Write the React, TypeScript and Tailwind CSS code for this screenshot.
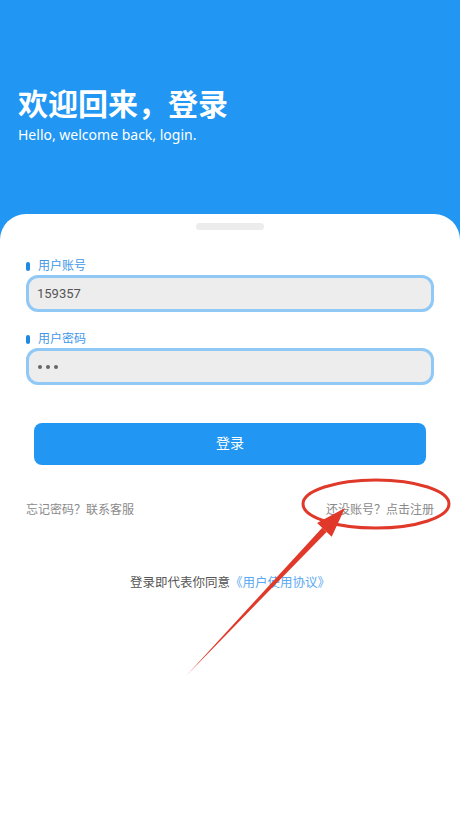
import React from "react";

const font = { fontFamily: '"Noto Sans", "Noto Sans CJK SC", sans-serif' };

function Field({ label, value, dots }: { label: string; value?: string; dots?: boolean }) {
  return (
    <div>
      <div className="flex items-center h-[16px] mt-[1px]">
        <span className="w-[4px] h-[9px] rounded-full bg-[#1e88e5]" />
        <span className="ml-[8px] text-[12px] leading-[16px] text-[#3f97e8]">{label}</span>
      </div>
      <div className="mt-[1px] h-[37px] rounded-[12px] border-[3px] border-[#90c8f6] bg-[#ededed] flex items-center px-[8px]">
        {dots ? (
          <div className="flex gap-[4px] ml-[1px]">
            <span className="w-[4px] h-[4px] rounded-full bg-[#666]" />
            <span className="w-[4px] h-[4px] rounded-full bg-[#666]" />
            <span className="w-[4px] h-[4px] rounded-full bg-[#666]" />
          </div>
        ) : (
          <span className="text-[13px] text-[#555]" style={{ fontFamily: "Roboto, sans-serif" }}>
            {value}
          </span>
        )}
      </div>
    </div>
  );
}

// red annotation drawn over the screenshot
function Annotation() {
  return (
    <svg className="absolute inset-0 pointer-events-none" width="460" height="819" viewBox="0 0 460 819">
      <ellipse cx="376" cy="504" rx="73" ry="24" fill="none" stroke="#e0392a" strokeWidth="3" />
      <polygon points="187,675 326.6,531.9 322.2,527.7" fill="#e0392a" />
      <polygon points="345,508 331.7,536.7 317.1,522.9" fill="#e0392a" />
    </svg>
  );
}

export default function App() {
  return (
    <div className="relative w-[460px] h-[819px] bg-[#2196f3] flex flex-col overflow-hidden" style={font}>
      <div className="h-[214px] px-[18px] pt-[85px] text-white">
        <h1 className="text-[30px] leading-[38px] font-bold">欢迎回来，登录</h1>
        <p className="text-[14px] leading-[18px] mt-[3px]">Hello, welcome back, login.</p>
      </div>

      <div className="flex-1 bg-white rounded-t-[26px] flex flex-col">
        <div className="mx-auto mt-[9px] w-[68px] h-[7px] rounded-full bg-[#ececec]" />

        <div className="px-[26px] mt-[27px] flex flex-col gap-[18px]">
          <Field label="用户账号" value="159357" />
          <Field label="用户密码" dots />
        </div>

        <button className="mx-[34px] mt-[38px] h-[42px] rounded-[8px] bg-[#2196f3] text-white text-[14px] leading-[20px] pb-[2px]">
          登录
        </button>

        <div className="px-[26px] mt-[37px] flex justify-between text-[12px] leading-[16px] text-[#8a8a8a]">
          <span>忘记密码？联系客服</span>
          <span>还没账号？点击注册</span>
        </div>

        <p className="mt-[56px] text-center text-[12.5px] leading-[18px] text-[#555]">
          登录即代表你同意<span className="text-[#5aa9f0]">《用户使用协议》</span>
        </p>
      </div>

      <Annotation />
    </div>
  );
}
